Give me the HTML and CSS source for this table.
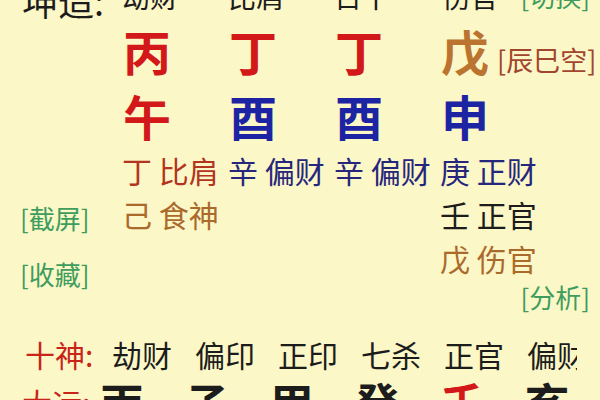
FILE: index.html
```html
<!DOCTYPE html>
<html lang="zh">
<head>
<meta charset="utf-8">
<title>八字排盘</title>
<link rel="stylesheet" href="styles.css">
</head>
<body>
<div class="page">
  <div class="grid row-top">
    <div class="title">坤造:</div>
    <div class="god">劫财</div>
    <div class="god">比肩</div>
    <div class="god">日干</div>
    <div class="god last">伤官<span class="link switch">[切换]</span></div>
  </div>
  <div class="grid row-big">
    <div></div>
    <div class="big red">丙</div>
    <div class="big red">丁</div>
    <div class="big red">丁</div>
    <div class="big brown">戊<span class="kong">[辰巳空]</span></div>
  </div>
  <div class="grid row-big row-branch">
    <div></div>
    <div class="big red">午</div>
    <div class="big blue">酉</div>
    <div class="big blue">酉</div>
    <div class="big blue">申</div>
  </div>
  <div class="grid row-hidden">
    <div class="links"><span class="link">[截屏]</span><span class="link">[收藏]</span></div>
    <div class="stack"><div class="hid fire">丁 比肩</div><div class="hid earth">己 食神</div></div>
    <div class="stack"><div class="hid metal">辛 偏财</div></div>
    <div class="stack"><div class="hid metal">辛 偏财</div></div>
    <div class="stack wide"><div class="hid metal">庚 正财</div><div class="hid water">壬 正官</div><div class="hid earth">戊 伤官</div><div class="link analyse">[分析]</div></div>
  </div>
  <div class="ten-gods">
    <span class="label">十神:</span>
    <span class="tg">劫财</span>
    <span class="tg">偏印</span>
    <span class="tg">正印</span>
    <span class="tg">七杀</span>
    <span class="tg">正官</span>
    <span class="tg">偏财</span>
  </div>
  <div class="luck">
    <span class="label">大运:</span>
    <span class="lk">丙</span>
    <span class="lk">子</span>
    <span class="lk">甲</span>
    <span class="lk">癸</span>
    <span class="lk red">壬</span>
    <span class="lk">亥</span>
  </div>
</div>
</body>
</html>
```
FILE: styles.css
```css
html, body {
  margin: 0;
  padding: 0;
  overflow: hidden;
  background: #fcf7c7;
}
.page {
  width: 600px;
  height: 400px;
  overflow: hidden;
  font-family: "Noto Sans CJK SC", "Noto Sans", sans-serif;
  color: #1c1c1c;
}
.grid {
  display: grid;
  grid-template-columns: 102px 106px 106px 106px 150px;
  padding-left: 20px;
  white-space: nowrap;
}
.row-top {
  margin-top: -22px;
  height: 40px;
  align-items: end;
}
.title {
  font-size: 36px;
  line-height: 36px;
  padding-left: 2px;
}
.god {
  font-size: 28px;
  line-height: 28px;
  margin-bottom: 8px;
}
.god.last {
  display: flex;
  padding-left: 2px;
}
.link {
  color: #3e9d5e;
  font-size: 26px;
}
.switch {
  margin-left: auto;
  line-height: 28px;
}
.row-big {
  margin-top: 8px;
  height: 48px;
}
.row-branch {
  margin-top: 17px;
}
.big {
  font-size: 48px;
  line-height: 48px;
  font-weight: 700;
  padding-left: 1px;
}
.red { color: #d3181a; }
.blue { color: #1c24a4; }
.brown { color: #bb7430; }
.kong {
  font-size: 27px;
  font-weight: 400;
  color: #a1452e;
  margin-left: 8px;
}
.row-hidden {
  margin-top: 9px;
  align-items: start;
}
.links {
  display: flex;
  flex-direction: column;
  padding-top: 42px;
}
.links .link {
  line-height: 56px;
}
.stack {
  display: flex;
  flex-direction: column;
}
.hid {
  font-size: 30px;
  line-height: 44px;
}
.fire { color: #b3341f; }
.metal { color: #26267c; }
.earth { color: #aa6a2c; }
.water { color: #1c1c1c; }
.analyse {
  align-self: flex-end;
  line-height: 30px;
  margin-top: 2px;
}
.ten-gods {
  display: flex;
  margin-top: 22px;
  padding-left: 25px;
  width: 552px;
  overflow: hidden;
  white-space: nowrap;
  font-size: 30px;
  line-height: 40px;
}
.ten-gods .label {
  color: #c92419;
  width: 87px;
  flex: none;
}
.tg {
  flex: none;
  width: 60px;
  margin-right: 23px;
}
.luck {
  display: flex;
  align-items: flex-start;
  margin-top: 6px;
  padding-left: 22px;
  white-space: nowrap;
}
.luck .label {
  color: #c92419;
  font-size: 30px;
  line-height: 44px;
  width: 78px;
  flex: none;
}
.lk {
  flex: none;
  font-size: 44px;
  line-height: 44px;
  font-weight: 700;
  width: 44px;
  margin-right: 41px;
}
```
